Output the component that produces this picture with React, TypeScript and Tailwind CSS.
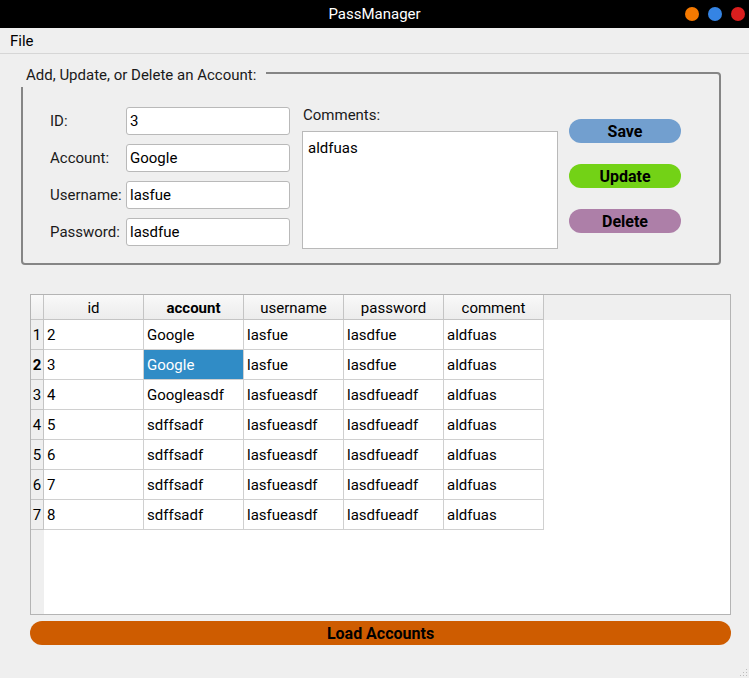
import React from 'react';

const rows = [
    { id: '2', account: 'Google', username: 'lasfue', password: 'lasdfue', comment: 'aldfuas' },
    { id: '3', account: 'Google', username: 'lasfue', password: 'lasdfue', comment: 'aldfuas' },
    { id: '4', account: 'Googleasdf', username: 'lasfueasdf', password: 'lasdfueadf', comment: 'aldfuas' },
    { id: '5', account: 'sdffsadf', username: 'lasfueasdf', password: 'lasdfueadf', comment: 'aldfuas' },
    { id: '6', account: 'sdffsadf', username: 'lasfueasdf', password: 'lasdfueadf', comment: 'aldfuas' },
    { id: '7', account: 'sdffsadf', username: 'lasfueasdf', password: 'lasdfueadf', comment: 'aldfuas' },
    { id: '8', account: 'sdffsadf', username: 'lasfueasdf', password: 'lasdfueadf', comment: 'aldfuas' },
];

const columns: { key: keyof typeof rows[number]; label: string }[] = [
    { key: 'id', label: 'id' },
    { key: 'account', label: 'account' },
    { key: 'username', label: 'username' },
    { key: 'password', label: 'password' },
    { key: 'comment', label: 'comment' },
];

const Field: React.FC<{ label: string; value: string }> = ({ label, value }) => (
    <div className="flex items-center h-[28px]">
        <span className="text-[15px] text-[#1a1a1a]">{label}</span>
        <div className="h-[28px] w-[164px] ml-auto bg-white border border-[#b9b9b9] rounded-[3px] flex items-center px-[3px] text-[15px] text-black">
            {value}
        </div>
    </div>
);

const PillButton: React.FC<{ label: string; color: string }> = ({ label, color }) => (
    <button className={`h-[24px] w-[112px] rounded-full ${color} text-[16px] font-bold text-black flex items-center justify-center pt-[2px]`}>
        {label}
    </button>
);

const App: React.FC = () => {
    const selectedRow = 1;

    return (
        <div className="w-[749px] h-[678px] bg-[#efefef] flex flex-col overflow-hidden relative" style={{ fontFamily: 'Roboto, "Noto Sans", sans-serif' }}>
            {/* title bar */}
            <div className="h-[28px] bg-black flex items-center justify-center relative shrink-0">
                <span className="text-white text-[15px]">PassManager</span>
                <div className="absolute right-[4px] top-[7px] flex gap-[9px]">
                    <span className="w-[14px] h-[14px] rounded-full bg-[#f57900]"></span>
                    <span className="w-[14px] h-[14px] rounded-full bg-[#3584e4]"></span>
                    <span className="w-[14px] h-[14px] rounded-full bg-[#d91e1e]"></span>
                </div>
            </div>

            {/* menu bar */}
            <div className="h-[26px] border-b border-[#d6d6d6] flex items-center px-[10px] pt-[1px] shrink-0">
                <span className="text-[15px] text-black">File</span>
            </div>

            {/* group box */}
            <div className="relative ml-[21px] mt-[18px] w-[700px] h-[193px] border-2 border-[#858585] rounded-[4px] shrink-0">
                <span className="absolute -left-[3px] -top-[9px] pl-[6px] pr-[10px] bg-[#efefef] text-[15px] text-[#1a1a1a] leading-[20px] h-[22px]">
                    Add, Update, or Delete an Account:
                </span>
                <div className="flex pt-[33px] pl-[27px]">
                    <div className="w-[240px] flex flex-col gap-[9px]">
                        <Field label="ID:" value="3" />
                        <Field label="Account:" value="Google" />
                        <Field label="Username:" value="lasfue" />
                        <Field label="Password:" value="lasdfue" />
                    </div>
                    <div className="ml-[12px] flex flex-col -mt-[2px]">
                        <span className="text-[15px] text-[#1a1a1a] leading-[20px] pl-[1px]">Comments:</span>
                        <div className="mt-[6px] w-[256px] h-[118px] bg-white border border-[#b9b9b9] px-[5px] pt-[5px] text-[15px] text-black">
                            aldfuas
                        </div>
                    </div>
                    <div className="ml-[11px] mt-[12px] flex flex-col gap-[21px]">
                        <PillButton label="Save" color="bg-[#729fcf]" />
                        <PillButton label="Update" color="bg-[#73d216]" />
                        <PillButton label="Delete" color="bg-[#ad7fa8]" />
                    </div>
                </div>
            </div>

            {/* table */}
            <div className="ml-[30px] mt-[29px] w-[701px] h-[321px] border border-[#b4b4b4] bg-white flex flex-col shrink-0 overflow-hidden">
                <div className="flex h-[25px] bg-[#efefef] shrink-0">
                    <div className="w-[13px] border-r border-b border-[#c4c4c4] bg-gradient-to-b from-[#f9f9f9] to-[#ececec]"></div>
                    {columns.map((c) => (
                        <div
                            key={c.key}
                            className={`w-[100px] border-r border-b border-[#c4c4c4] bg-gradient-to-b from-[#f9f9f9] to-[#ececec] flex items-center justify-center pt-[2px] text-[15px] text-black ${c.key === 'account' ? 'font-bold' : ''}`}
                        >
                            {c.label}
                        </div>
                    ))}
                </div>
                <div className="flex flex-1">
                    <div className="w-[13px] bg-[#efefef] flex flex-col shrink-0">
                        {rows.map((r, i) => (
                            <div
                                key={r.id}
                                className={`h-[30px] border-r border-b border-[#c4c4c4] flex items-center justify-center pt-[1px] text-[15px] text-black ${i === selectedRow ? 'font-bold' : ''}`}
                            >
                                {i + 1}
                            </div>
                        ))}
                    </div>
                    <div className="flex flex-col">
                        {rows.map((r, i) => (
                            <div key={r.id} className="flex h-[30px]">
                                {columns.map((c) => {
                                    const selected = i === selectedRow && c.key === 'account';
                                    return (
                                        <div
                                            key={c.key}
                                            className={`w-[100px] border-r border-b border-[#d0d0d0] flex items-center pl-[3px] pt-[1px] text-[15px] ${selected ? 'bg-[#308cc6] text-white' : 'text-black'}`}
                                        >
                                            {r[c.key]}
                                        </div>
                                    );
                                })}
                            </div>
                        ))}
                    </div>
                </div>
            </div>

            {/* load button */}
            <button className="ml-[30px] mt-[6px] w-[701px] h-[24px] rounded-full bg-[#ce5c00] text-[16px] font-bold text-black flex items-center justify-center pt-[2px] shrink-0">
                Load Accounts
            </button>

            {/* resize grip */}
            <svg className="absolute right-[1px] bottom-[1px]" width="10" height="10" viewBox="0 0 10 10">
                <rect x="8" y="2" width="1" height="1" fill="#bcbcbc" />
                <rect x="5" y="5" width="1" height="1" fill="#bcbcbc" />
                <rect x="8" y="5" width="1" height="1" fill="#bcbcbc" />
                <rect x="2" y="8" width="1" height="1" fill="#bcbcbc" />
                <rect x="5" y="8" width="1" height="1" fill="#bcbcbc" />
                <rect x="8" y="8" width="1" height="1" fill="#bcbcbc" />
            </svg>
        </div>
    );
};

export default App;
